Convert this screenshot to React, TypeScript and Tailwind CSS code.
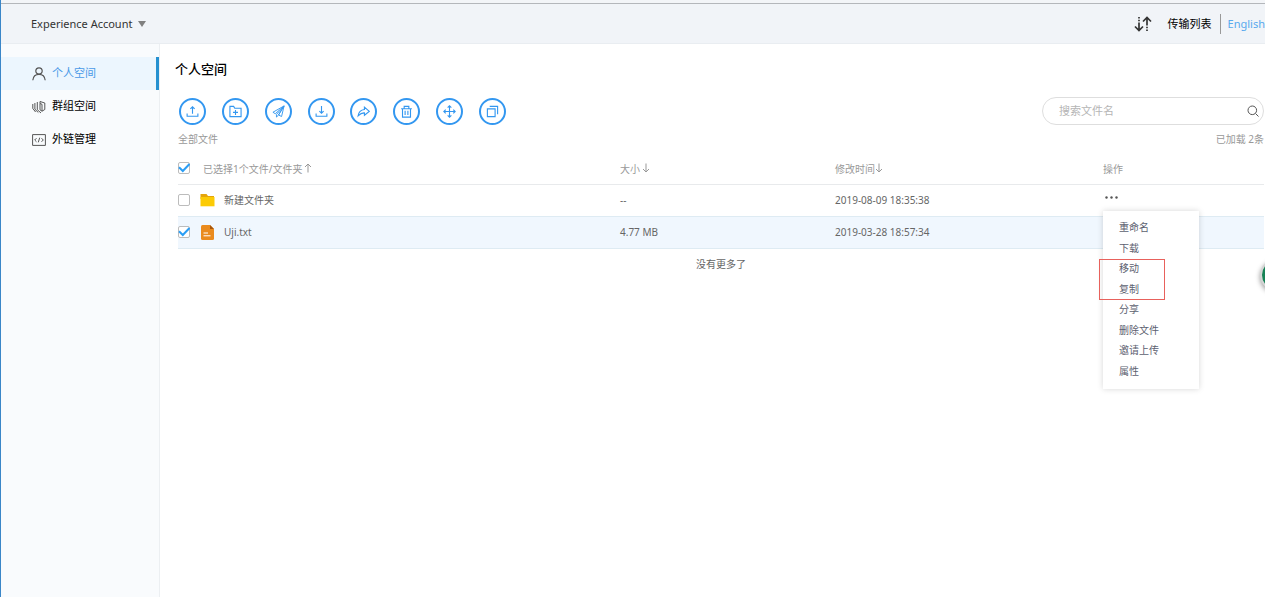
import type { ReactNode } from "react"
import { useState } from "react"

const SANS = "font-['Noto_Sans','Noto_Sans_CJK_SC',sans-serif]"

function Glyph({ children, className = "size-[14px]" }: { children: ReactNode; className?: string }) {
  return (
    <svg viewBox="0 0 14 14" fill="none" stroke="currentColor" strokeWidth="1.2" className={className} aria-hidden="true">
      {children}
    </svg>
  )
}

const navItems = [
  {
    label: "个人空间",
    active: true,
    icon: (
      <>
        <circle cx="7" cy="4" r="3.2" />
        <path d="M.8 13.200C1.200 9.600 3.600 7.300 7 7.300s5.800 2.300 6.200 5.900" />
      </>
    ),
  },
  {
    label: "群组空间",
    active: false,
    icon: (
      <g strokeWidth="1">
        <path d="M8 1.500 12.800 3v6.500L10 11.200V4.300L8 3.500z" />
        <path d="M8 3.500v6.300l2 1.400" />
        <path d="M5.300 2v7.700L9 13M2.900 3v6.200l3.400 3.300M.8 4v4.500L3.600 12" />
      </g>
    ),
  },
  {
    label: "外链管理",
    active: false,
    icon: (
      <g strokeWidth="1">
        <path d="M.6 1.600h12.800v10.800H.6z" />
        <path d="M4.500 5.200 2.700 7l1.800 1.800M9.500 5.200l1.800 1.800-1.800 1.800M7.700 4.700 6.300 9.300" />
      </g>
    ),
  },
]

const tools = [
  { label: "上传", icon: <path d="M7 9.500V2M4.700 4.200 7 1.900l2.300 2.300M1.200 9.200v2.900h11.600V9.200" /> },
  { label: "新建文件夹", icon: <path d="M1 12.500V1.500h4l1.200 2H13v9zM7 5.300v5.400M4.300 8h5.400" /> },
  {
    label: "发送",
    icon: <path strokeWidth="1" d="M13 1 1 7.800l2.500 1.600L13 1 4.800 10.200v2.800l2-1.900L13 1 7 10.800l3.300 1.600z" />,
  },
  { label: "下载", icon: <path d="M7 1v7.800M4.700 6.500 7 8.800l2.300-2.300M1.200 9.200v2.900h11.600V9.200" /> },
  { label: "分享", icon: <path d="M8 2.300 13.200 6.800 8 11V8.500c-2.800-.3-4.500.9-6.800 3.200C1.700 8 3.600 5.200 8 4.800z" /> },
  { label: "删除", icon: <path d="M1.200 4h11.600M4.500 4V1.500h5V4M2.700 4v9h8.600V4M5.500 6.200v4.600M8.500 6.200v4.600" /> },
  {
    label: "移动",
    icon: <path d="M7 1v12M1 7h12M5 2.900 7 .9l2 2M5 11.100l2 2 2-2M2.900 5l-2 2 2 2M11.100 5l2 2-2 2" />,
  },
  { label: "复制", icon: <path d="M1.500 4.200h8.300v8.300H1.500zM4 1.500h8.500V10" /> },
]

const menuItems = ["重命名", "下载", "移动", "复制", "分享", "删除文件", "邀请上传", "属性"]

function Check({ label, defaultChecked }: { label: string; defaultChecked?: boolean }) {
  return (
    <span className="relative block size-3">
      <input
        type="checkbox"
        aria-label={label}
        defaultChecked={defaultChecked}
        className="peer block size-3 appearance-none rounded-xs border border-[#bcbcbc] bg-white"
      />
      <svg
        viewBox="0 0 12 12"
        fill="none"
        stroke="#2b9ef5"
        strokeWidth="2"
        className="pointer-events-none absolute inset-0 hidden peer-checked:block"
      >
        <path d="M1 5.200 4.800 9 11.500 2" />
      </svg>
    </span>
  )
}

function SortArrow({ up }: { up?: boolean }) {
  return (
    <svg viewBox="0 0 8 10" fill="none" stroke="currentColor" className="mb-0.5 h-[10px] w-2" aria-hidden="true">
      <path d={up ? "M4 9.500V1M1 4l3-3 3 3" : "M4 .5V9M1 6l3 3 3-3"} />
    </svg>
  )
}

function FolderIcon() {
  return (
    <svg viewBox="0 0 15 14" className="h-[14px] w-[15px]" aria-hidden="true">
      <path d="M.5 1h6l1.500 2h6v3H.5z" fill="#e5a50a" />
      <path d="M.5 4h14v9.300H.5z" fill="#fccb05" />
    </svg>
  )
}

function FileIcon() {
  return (
    <svg viewBox="0 0 15 15" className="size-[15px]" aria-hidden="true">
      <path d="M1 1.500Q1 0 2.500 0H10l4 4v9.500q0 1.500-1.500 1.500h-10Q1 15 1 13.500z" fill="#ea8b1e" />
      <path d="M10 0v4h4z" fill="#a8560a" />
      <path d="M3.500 8H8M3.500 10.800h7" stroke="#fff" />
    </svg>
  )
}

function Header() {
  return (
    <header className="flex h-10 items-center justify-between border-b border-[#e9edf1] bg-[#f1f4f8] pt-px pl-[30px]">
      <button className="flex items-center gap-[6px] text-[11px] text-[#333]">
        Experience Account
        <svg viewBox="0 0 8 6" className="h-[6px] w-2" aria-hidden="true">
          <path d="M0 0h8L4 6z" fill="#808080" />
        </svg>
      </button>
      <div className="flex items-center text-[11px]">
        <button className="flex items-center gap-4 text-black">
          <svg viewBox="0 0 18 16" fill="none" stroke="#333" strokeWidth="1.700" className="h-4 w-[18px]" aria-hidden="true">
            <path d="M1 10.500 5 14.500 9 10.500M9 5.500l4-4 4 4M5 6.500v8M13 1.500v8" />
            <path d="M5 1v1.500M5 3.800v1.500M13 10.800v1.500M13 13.500V15" />
          </svg>
          传输列表
        </button>
        <span className="mr-[7px] ml-2 h-5 w-px bg-[#999]" />
        <a href="#en" className="text-[#58a9ee]">
          English
        </a>
      </div>
    </header>
  )
}

function RowMenu() {
  return (
    <div className="absolute top-[26px] left-0 z-10 flex h-[178px] w-24 flex-col bg-white py-[7px] shadow-[0_0_6px_rgba(0,0,0,0.16)]">
      {menuItems.map((item) => (
        <button key={item} className="flex flex-1 items-center pl-4 text-left text-[10px] text-[#5c6170]">
          {item}
        </button>
      ))}
      <div className="pointer-events-none absolute top-12 -left-1 h-[41px] w-[66px] border border-[#e8615c]" />
    </div>
  )
}

export default function App() {
  const [open, setOpen] = useState(true)

  return (
    <div className={`${SANS} relative flex min-h-screen flex-col overflow-hidden border-l border-[#3a86c8] bg-white`}>
      <div className="h-1 border-b border-[#b4b7bb] bg-[#f3f5f8]" />
      <Header />
      <div className="flex flex-1">
        <nav className="w-[159px] shrink-0 border-r border-[#eceff2] bg-[#f9fbfd] pt-[13px]">
          {navItems.map((item) => (
            <a
              key={item.label}
              href="#space"
              className={`flex h-[33px] items-center gap-[6px] pl-[31px] text-[11px] ${
                item.active ? "border-r-3 border-[#2490d0] bg-[#ecf6fe] text-[#4a9ae8]" : "text-black"
              }`}
            >
              <span className="text-[#555]">
                <Glyph>{item.icon}</Glyph>
              </span>
              {item.label}
            </a>
          ))}
        </nav>

        <main className="min-w-0 flex-1 pr-px pl-[18px]">
          <h1 className="-ml-[3px] pt-[15px] text-[13px] leading-5 font-medium text-black">个人空间</h1>
          <div className="mt-[18px] flex items-center justify-between">
            <div className="flex w-[328px] justify-between pl-px">
              {tools.map((tool) => (
                <button
                  key={tool.label}
                  aria-label={tool.label}
                  className="flex size-[27px] items-center justify-center rounded-full border-2 border-[#3397f0] text-[#3397f0]"
                >
                  <Glyph className="size-[13px]">{tool.icon}</Glyph>
                </button>
              ))}
            </div>
            <label className="flex h-7 w-[222px] items-center rounded-full border border-[#dedede] pr-1 pl-4">
              <input
                aria-label="搜索文件名"
                placeholder="搜索文件名"
                className="min-w-0 flex-1 text-[11px] outline-none placeholder:text-[#b5b5b5]"
              />
              <svg viewBox="0 0 12 12" fill="none" stroke="#555" className="size-3" aria-hidden="true">
                <circle cx="5.300" cy="5.300" r="4.300" />
                <path d="m8.500 8.500 3 3" />
              </svg>
            </label>
          </div>
          <div className="mt-1 flex h-5 items-center justify-between text-[10px] text-[#999]">
            <span>全部文件</span>
            <span>已加载 2条</span>
          </div>

          <table className="mt-[3px] w-full table-fixed text-left text-[10px] text-[#666]">
            <colgroup>
              <col className="w-[25px]" />
              <col />
              <col className="w-[215px]" />
              <col className="w-[268px]" />
              <col className="w-[161px]" />
            </colgroup>
            <thead>
              <tr className="h-8 border-b border-[#e8eaec] text-[#999]">
                <th>
                  <Check label="全选" defaultChecked />
                </th>
                <th className="pt-[3px] font-normal">
                  <span className="flex items-center gap-[2px]">
                    已选择1个文件/文件夹 <SortArrow up />
                  </span>
                </th>
                <th className="pt-[3px] font-normal">
                  <span className="flex items-center gap-[2px]">
                    大小 <SortArrow />
                  </span>
                </th>
                <th className="pt-[3px] font-normal">
                  <span className="flex items-center">
                    修改时间 <SortArrow />
                  </span>
                </th>
                <th className="pt-[3px] font-normal">操作</th>
              </tr>
            </thead>
            <tbody>
              <tr className="h-8 border-b border-[#deebf3]">
                <td>
                  <Check label="新建文件夹" />
                </td>
                <td>
                  <span className="-ml-[3px] flex items-center gap-[9px]">
                    <FolderIcon />
                    新建文件夹
                  </span>
                </td>
                <td>--</td>
                <td>2019-08-09 18:35:38</td>
                <td className="relative align-top">
                  <button aria-label="更多" className="block px-0.5 pt-[11px] pb-1 text-[#555]" onClick={() => setOpen(!open)}>
                    <svg viewBox="0 0 13 3" fill="currentColor" className="h-[3px] w-[13px]">
                      <circle cx="1.500" cy="1.500" r="1.200" />
                      <circle cx="6.500" cy="1.500" r="1.200" />
                      <circle cx="11.500" cy="1.500" r="1.200" />
                    </svg>
                  </button>
                  {open && <RowMenu />}
                </td>
              </tr>
              <tr className="h-8 border-b border-[#deebf3] bg-[#f0f7fe]">
                <td>
                  <Check label="Uji.txt" defaultChecked />
                </td>
                <td>
                  <span className="-ml-[3px] flex items-center gap-[9px]">
                    <FileIcon />
                    Uji.txt
                  </span>
                </td>
                <td>4.77 MB</td>
                <td>2019-03-28 18:57:34</td>
                <td />
              </tr>
            </tbody>
          </table>
          <p className="pt-[7px] text-center text-[10px] leading-4 text-[#666]">没有更多了</p>
        </main>
      </div>
      <div className="absolute top-[259px] -right-[27px] size-8 rounded-full border-2 border-[#d5d5d5] bg-[#168255] shadow-[0_2px_5px_rgba(0,0,0,0.4)]" />
    </div>
  )
}
